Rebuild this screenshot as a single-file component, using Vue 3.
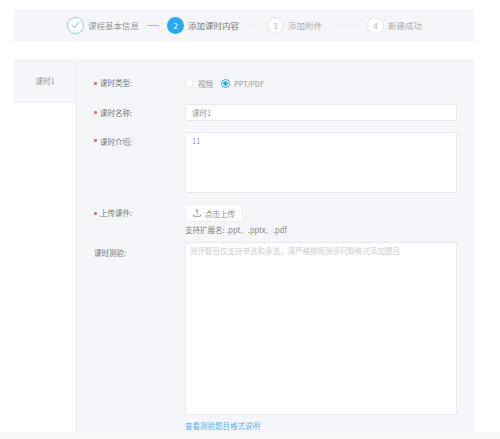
<script setup>
const steps = [
  { key: 1, label: '课程基本信息', state: 'done', line: 'active', lineWidth: 12 },
  { key: 2, label: '添加课时内容', state: 'current', line: 'plain', lineWidth: 12 },
  { key: 3, label: '添加附件', state: 'todo', line: 'plain', lineWidth: 29 },
  { key: 4, label: '新建成功', state: 'todo', line: '', lineWidth: 0 },
]
</script>

<template>
  <div class="page">
    <div class="content">
      <div class="stepper">
        <template v-for="s in steps" :key="s.key">
          <div class="step" :class="s.state">
            <span class="circle">
              <svg v-if="s.state === 'done'" width="9" height="8" viewBox="0 0 9 8" fill="none">
                <path d="M1 4.2 L3.4 6.6 L8 1.2" stroke="#3fa9dc" stroke-width="0.8" />
              </svg>
              <template v-else>{{ s.key }}</template>
            </span>
            <span class="step-label">{{ s.label }}</span>
          </div>
          <span
            v-if="s.line"
            class="step-line"
            :class="s.line"
            :style="{ width: s.lineWidth + 'px' }"
          ></span>
        </template>
      </div>

      <div class="panel">
        <aside class="side">
          <div class="tab">课时1</div>
        </aside>
        <main class="form">
          <div class="row row-radio">
            <label class="label req">课时类型:</label>
            <div class="radios">
              <span class="radio"><i class="dot-box"></i>视频</span>
              <span class="radio"><i class="dot-box on"></i>PPT/PDF</span>
            </div>
          </div>
          <div class="row row-name">
            <label class="label req">课时名称:</label>
            <div class="input">课时1</div>
          </div>
          <div class="row row-intro">
            <label class="label req">课时介绍:</label>
            <div class="textarea intro">11</div>
          </div>
          <div class="row row-upload">
            <label class="label req">上传课件:</label>
            <div class="upload-col">
              <button class="upload" type="button">
                <svg width="8" height="8" viewBox="0 0 8 8" fill="none" stroke="#777" stroke-width="0.7">
                  <path d="M4 0.5 V5.5 M2.4 2 L4 0.5 L5.6 2 M0.6 5.5 V7.3 H7.4 V5.5" />
                </svg>
                点击上传
              </button>
              <div class="hint">支持扩展名: .ppt、.pptx、.pdf</div>
            </div>
          </div>
          <div class="row row-test">
            <label class="label">课时测验:</label>
            <div class="test-col">
              <div class="textarea test">测评题目仅支持单选和多选，请严格按照测评问题格式添加题目</div>
              <a class="link">查看测验题目格式说明</a>
            </div>
          </div>
        </main>
      </div>
    </div>
    <div class="bottom"></div>
  </div>
</template>

<style scoped>
.page {
  width: 500px;
  height: 439px;
  display: flex;
  flex-direction: column;
  overflow: hidden;
  background: #fff;
  font-family: "Noto Sans CJK SC", "Noto Sans", sans-serif;
  color: #777;
}
.content {
  flex: 1;
  min-height: 0;
  padding: 9px 26px 0 14px;
  display: flex;
  flex-direction: column;
  overflow: hidden;
}
.stepper {
  height: 32px;
  flex: none;
  background: #f5f6fa;
  display: flex;
  align-items: center;
  padding-left: 53px;
  font-size: 8.5px;
}
.step {
  display: flex;
  align-items: center;
  gap: 4px;
  color: #969696;
}
.step.current { color: #777; }
.step.todo { color: #adadad; }
.circle {
  width: 17px;
  height: 17px;
  box-sizing: border-box;
  border-radius: 50%;
  display: flex;
  align-items: center;
  justify-content: center;
  font-size: 7.5px;
}
.done .circle { border: 1px solid #8ccbea; background: #fff; }
.current .circle { background: #2aa9ef; color: #fff; }
.todo .circle { border: 1px solid #e2e4e9; background: #fff; color: #b4b4b4; }
.step-label { line-height: 12px; white-space: nowrap; }
.step-line {
  height: 1px;
  margin: 0 8px;
  background: #eceef2;
}
.step-line.active { background: #7cc8ee; }

.panel {
  flex: 1;
  min-height: 0;
  margin-top: 18px;
  display: flex;
}
.side {
  width: 62px;
  flex: none;
  border-right: 1px solid #eceef4;
}
.tab {
  height: 44px;
  background: #f5f6fa;
  border-bottom: 1px solid #f0f1f5;
  box-sizing: border-box;
  display: flex;
  align-items: center;
  justify-content: center;
  padding-bottom: 1px;
  font-size: 7.5px;
  color: #959595;
}
.form {
  flex: 1;
  min-width: 0;
  background: #f5f6fa;
  padding: 16px 17px 0;
  font-size: 7.5px;
  overflow: hidden;
}
.row {
  display: flex;
  align-items: flex-start;
}
.label {
  width: 91px;
  flex: none;
  line-height: 16px;
  color: #777;
  white-space: nowrap;
  box-sizing: border-box;
}
.label.req { position: relative; padding-left: 6px; }
.label.req::before {
  content: "";
  position: absolute;
  left: 0;
  top: 7px;
  width: 2.5px;
  height: 2.5px;
  border-radius: 50%;
  background: #e8637a;
}
.row-name { margin-top: 13px; }
.row-intro { margin-top: 11px; }
.row-upload { margin-top: 11px; }
.row-test { margin-top: 7px; }
.row-name .label { line-height: 17px; }
.row-intro .label { line-height: 19px; }
.row-upload .label { line-height: 18px; }
.row-upload .label.req::before { top: 8px; }
.row-test .label { line-height: 21px; }
.radios {
  display: flex;
  align-items: center;
  gap: 8px;
  height: 16px;
  color: #959595;
}
.radio { display: flex; align-items: center; gap: 4px; }
.dot-box {
  width: 9px;
  height: 9px;
  box-sizing: border-box;
  border-radius: 50%;
  border: 1px solid #e8eaee;
  background: #fff;
  display: block;
}
.dot-box.on {
  border-color: #2aa9ef;
  background: radial-gradient(circle, #2aa9ef 0 2px, #fff 2.4px);
}
.input,
.textarea {
  flex: 1;
  background: #fff;
  border: 1px solid #e8eaf0;
  border-radius: 1px;
  box-sizing: border-box;
  padding: 0 6px;
  color: #959595;
}
.input { height: 17px; line-height: 15px; }
.textarea.intro { height: 61px; padding-top: 2px; line-height: 11px; }
.upload-col { flex: 1; }
.upload {
  height: 18px;
  width: 58px;
  border: 1px solid #eceef3;
  border-radius: 1px;
  background: #fff;
  font: inherit;
  color: #888;
  display: flex;
  align-items: center;
  justify-content: center;
  gap: 4px;
  padding: 0;
}
.hint { margin-top: 2px; line-height: 11px; color: #858585; white-space: nowrap; }
.test-col { flex: 1; min-width: 0; }
.textarea.test {
  height: 173px;
  padding: 1.5px 4px;
  line-height: 11px;
  color: #cbcdd2;
  white-space: nowrap;
  overflow: hidden;
}
.link {
  display: block;
  margin-top: 6px;
  line-height: 10px;
  color: #5fb2ec;
  white-space: nowrap;
}
.bottom {
  flex: none;
  height: 7px;
  background: #f7f7f7;
}
</style>
